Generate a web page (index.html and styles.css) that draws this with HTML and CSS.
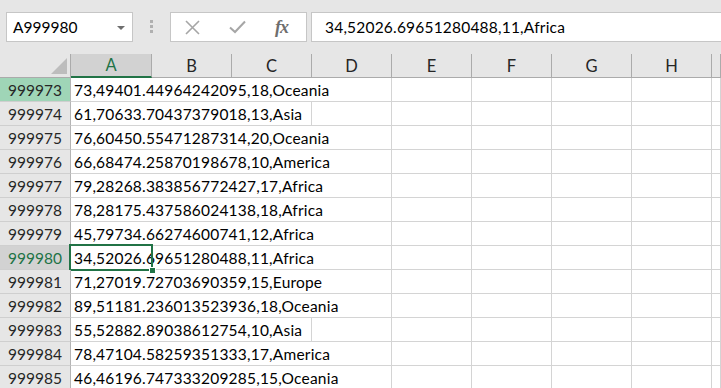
FILE: index.html
```html
<!DOCTYPE html>
<html>
<head>
    <title>Book1 - Excel</title>
    <link rel="stylesheet" href="styles.css">
</head>
<body>
    <div class="formula-bar">
        <div class="name-box">
            <span>A999980</span>
            <span class="caret"></span>
        </div>
        <div class="grip"><i></i><i></i><i></i></div>
        <div class="fx-buttons">
            <svg class="icon-cancel" width="15" height="15" viewBox="0 0 15 15">
                <path d="M1 1 L14 14 M14 1 L1 14" stroke="#a6a6a6" stroke-width="1.6" fill="none"/>
            </svg>
            <svg class="icon-enter" width="17" height="14" viewBox="0 0 17 14">
                <path d="M1 7.5 L6 12 L16 1.5" stroke="#a6a6a6" stroke-width="2" fill="none"/>
            </svg>
            <span class="fx">fx</span>
        </div>
        <div class="formula-input">34,52026.69651280488,11,Africa</div>
    </div>

    <div class="sheet">
        <div class="row head">
            <div class="corner"><div class="corner-tri"></div></div>
            <div class="col-head selected">A</div>
            <div class="col-head">B</div>
            <div class="col-head">C</div>
            <div class="col-head">D</div>
            <div class="col-head">E</div>
            <div class="col-head">F</div>
            <div class="col-head">G</div>
            <div class="col-head">H</div>
            <div class="col-head"></div>
        </div>

        <div class="row">
            <div class="row-head marked">999973</div>
            <div class="cell span4">73,49401.44964242095,18,Oceania</div>
            <div class="cell"></div><div class="cell"></div><div class="cell"></div><div class="cell"></div><div class="cell"></div>
        </div>
        <div class="row">
            <div class="row-head">999974</div>
            <div class="cell span3">61,70633.70437379018,13,Asia</div>
            <div class="cell"></div><div class="cell"></div><div class="cell"></div><div class="cell"></div><div class="cell"></div><div class="cell"></div>
        </div>
        <div class="row">
            <div class="row-head">999975</div>
            <div class="cell span4">76,60450.55471287314,20,Oceania</div>
            <div class="cell"></div><div class="cell"></div><div class="cell"></div><div class="cell"></div><div class="cell"></div>
        </div>
        <div class="row">
            <div class="row-head">999976</div>
            <div class="cell span4">66,68474.25870198678,10,America</div>
            <div class="cell"></div><div class="cell"></div><div class="cell"></div><div class="cell"></div><div class="cell"></div>
        </div>
        <div class="row">
            <div class="row-head">999977</div>
            <div class="cell span4">79,28268.383856772427,17,Africa</div>
            <div class="cell"></div><div class="cell"></div><div class="cell"></div><div class="cell"></div><div class="cell"></div>
        </div>
        <div class="row">
            <div class="row-head">999978</div>
            <div class="cell span4">78,28175.437586024138,18,Africa</div>
            <div class="cell"></div><div class="cell"></div><div class="cell"></div><div class="cell"></div><div class="cell"></div>
        </div>
        <div class="row">
            <div class="row-head">999979</div>
            <div class="cell span4">45,79734.66274600741,12,Africa</div>
            <div class="cell"></div><div class="cell"></div><div class="cell"></div><div class="cell"></div><div class="cell"></div>
        </div>
        <div class="row">
            <div class="row-head active">999980</div>
            <div class="cell span4">34,52026.69651280488,11,Africa</div>
            <div class="cell"></div><div class="cell"></div><div class="cell"></div><div class="cell"></div><div class="cell"></div>
            <div class="selection"><span class="handle"></span></div>
        </div>
        <div class="row">
            <div class="row-head">999981</div>
            <div class="cell span4">71,27019.72703690359,15,Europe</div>
            <div class="cell"></div><div class="cell"></div><div class="cell"></div><div class="cell"></div><div class="cell"></div>
        </div>
        <div class="row">
            <div class="row-head">999982</div>
            <div class="cell span4">89,51181.236013523936,18,Oceania</div>
            <div class="cell"></div><div class="cell"></div><div class="cell"></div><div class="cell"></div><div class="cell"></div>
        </div>
        <div class="row">
            <div class="row-head">999983</div>
            <div class="cell span3">55,52882.89038612754,10,Asia</div>
            <div class="cell"></div><div class="cell"></div><div class="cell"></div><div class="cell"></div><div class="cell"></div><div class="cell"></div>
        </div>
        <div class="row">
            <div class="row-head">999984</div>
            <div class="cell span4">78,47104.58259351333,17,America</div>
            <div class="cell"></div><div class="cell"></div><div class="cell"></div><div class="cell"></div><div class="cell"></div>
        </div>
        <div class="row">
            <div class="row-head">999985</div>
            <div class="cell span4">46,46196.747333209285,15,Oceania</div>
            <div class="cell"></div><div class="cell"></div><div class="cell"></div><div class="cell"></div><div class="cell"></div>
        </div>
    </div>
</body>
</html>
```

FILE: styles.css
```css
* {
    box-sizing: border-box;
}
html, body {
    margin: 0;
    padding: 0;
    width: 721px;
    height: 388px;
    overflow: hidden;
    background: white;
}
body {
    font-family: Lato, "Open Sans", sans-serif;
    font-size: 15.5px;
    color: #000;
}

/* formula bar */
.formula-bar {
    height: 54px;
    background: #e6e6e6;
    display: flex;
    align-items: flex-start;
    padding: 12px 0 0 6px;
}
.name-box {
    width: 127px;
    height: 30px;
    background: white;
    border: 1px solid #c6c6c6;
    display: flex;
    align-items: center;
    justify-content: space-between;
    padding: 0 7px 0 6px;
}
.caret {
    width: 0;
    height: 0;
    border-left: 4px solid transparent;
    border-right: 4px solid transparent;
    border-top: 4px solid #6e6e6e;
    margin-top: 1px;
}
.grip {
    margin-left: 17px;
    margin-top: 8px;
    display: flex;
    flex-direction: column;
    gap: 2px;
}
.grip i {
    display: block;
    width: 3px;
    height: 3px;
    background: #b0b0b0;
}
.fx-buttons {
    margin-left: 17px;
    width: 137px;
    height: 30px;
    background: white;
    border: 1px solid #c6c6c6;
    display: flex;
    align-items: center;
    padding-left: 14px;
}
.icon-enter {
    margin-left: 29px;
}
.fx {
    margin-left: 29px;
    font-family: "Liberation Serif", serif;
    font-style: italic;
    font-weight: bold;
    font-size: 18px;
    color: #6e6e6e;
    letter-spacing: -1px;
}
.formula-input {
    flex: 1;
    margin-left: 4px;
    margin-right: -5px;
    height: 30px;
    background: white;
    border: 1px solid #c6c6c6;
    display: flex;
    align-items: center;
    padding-left: 13px;
    white-space: nowrap;
    letter-spacing: 0.2px;
}

/* grid */
.row {
    display: grid;
    grid-template-columns: 71px 81px repeat(7, 80px) 1fr;
    height: 24px;
    position: relative;
}
.row > div {
    border-bottom: 1px solid #d4d4d4;
    border-right: 1px solid #d4d4d4;
}
.row.head > div {
    background: #e6e6e6;
    border-bottom-color: #ababab;
    border-right-color: #ababab;
}
.corner {
    display: flex;
    justify-content: flex-end;
    align-items: flex-end;
    padding: 0 3px 3px 0;
}
.corner-tri {
    width: 16px;
    height: 16px;
    background: #bdbdbd;
    clip-path: polygon(100% 0, 100% 100%, 0 100%);
}
.col-head {
    display: flex;
    align-items: center;
    justify-content: center;
    color: #262626;
    font-size: 16.5px;
}
.row.head .col-head.selected {
    background: #d2d2d2;
    color: #217346;
    border-bottom: 2px solid #217346;
}
.row-head {
    background: #e6e6e6;
    display: flex;
    align-items: center;
    justify-content: center;
    color: #262626;
}
.row > .row-head {
    border-right-color: #b4b4b4;
    border-bottom-color: #cfcfcf;
}
.row-head.marked {
    background: #9fd5b7;
}
.row-head.active {
    background: #d2d2d2;
    color: #217346;
}
.cell {
    padding-left: 3px;
    display: flex;
    align-items: center;
    white-space: nowrap;
    letter-spacing: 0.2px;
}
.span3 {
    grid-column: span 3;
}
.span4 {
    grid-column: span 4;
}
.row > .selection {
    position: absolute;
    left: 69px;
    top: -2px;
    width: 84px;
    height: 27px;
    border: 2px solid #217346;
}
.handle {
    position: absolute;
    right: -5px;
    bottom: -5px;
    width: 7px;
    height: 7px;
    background: #217346;
    border: 1px solid white;
}
```
